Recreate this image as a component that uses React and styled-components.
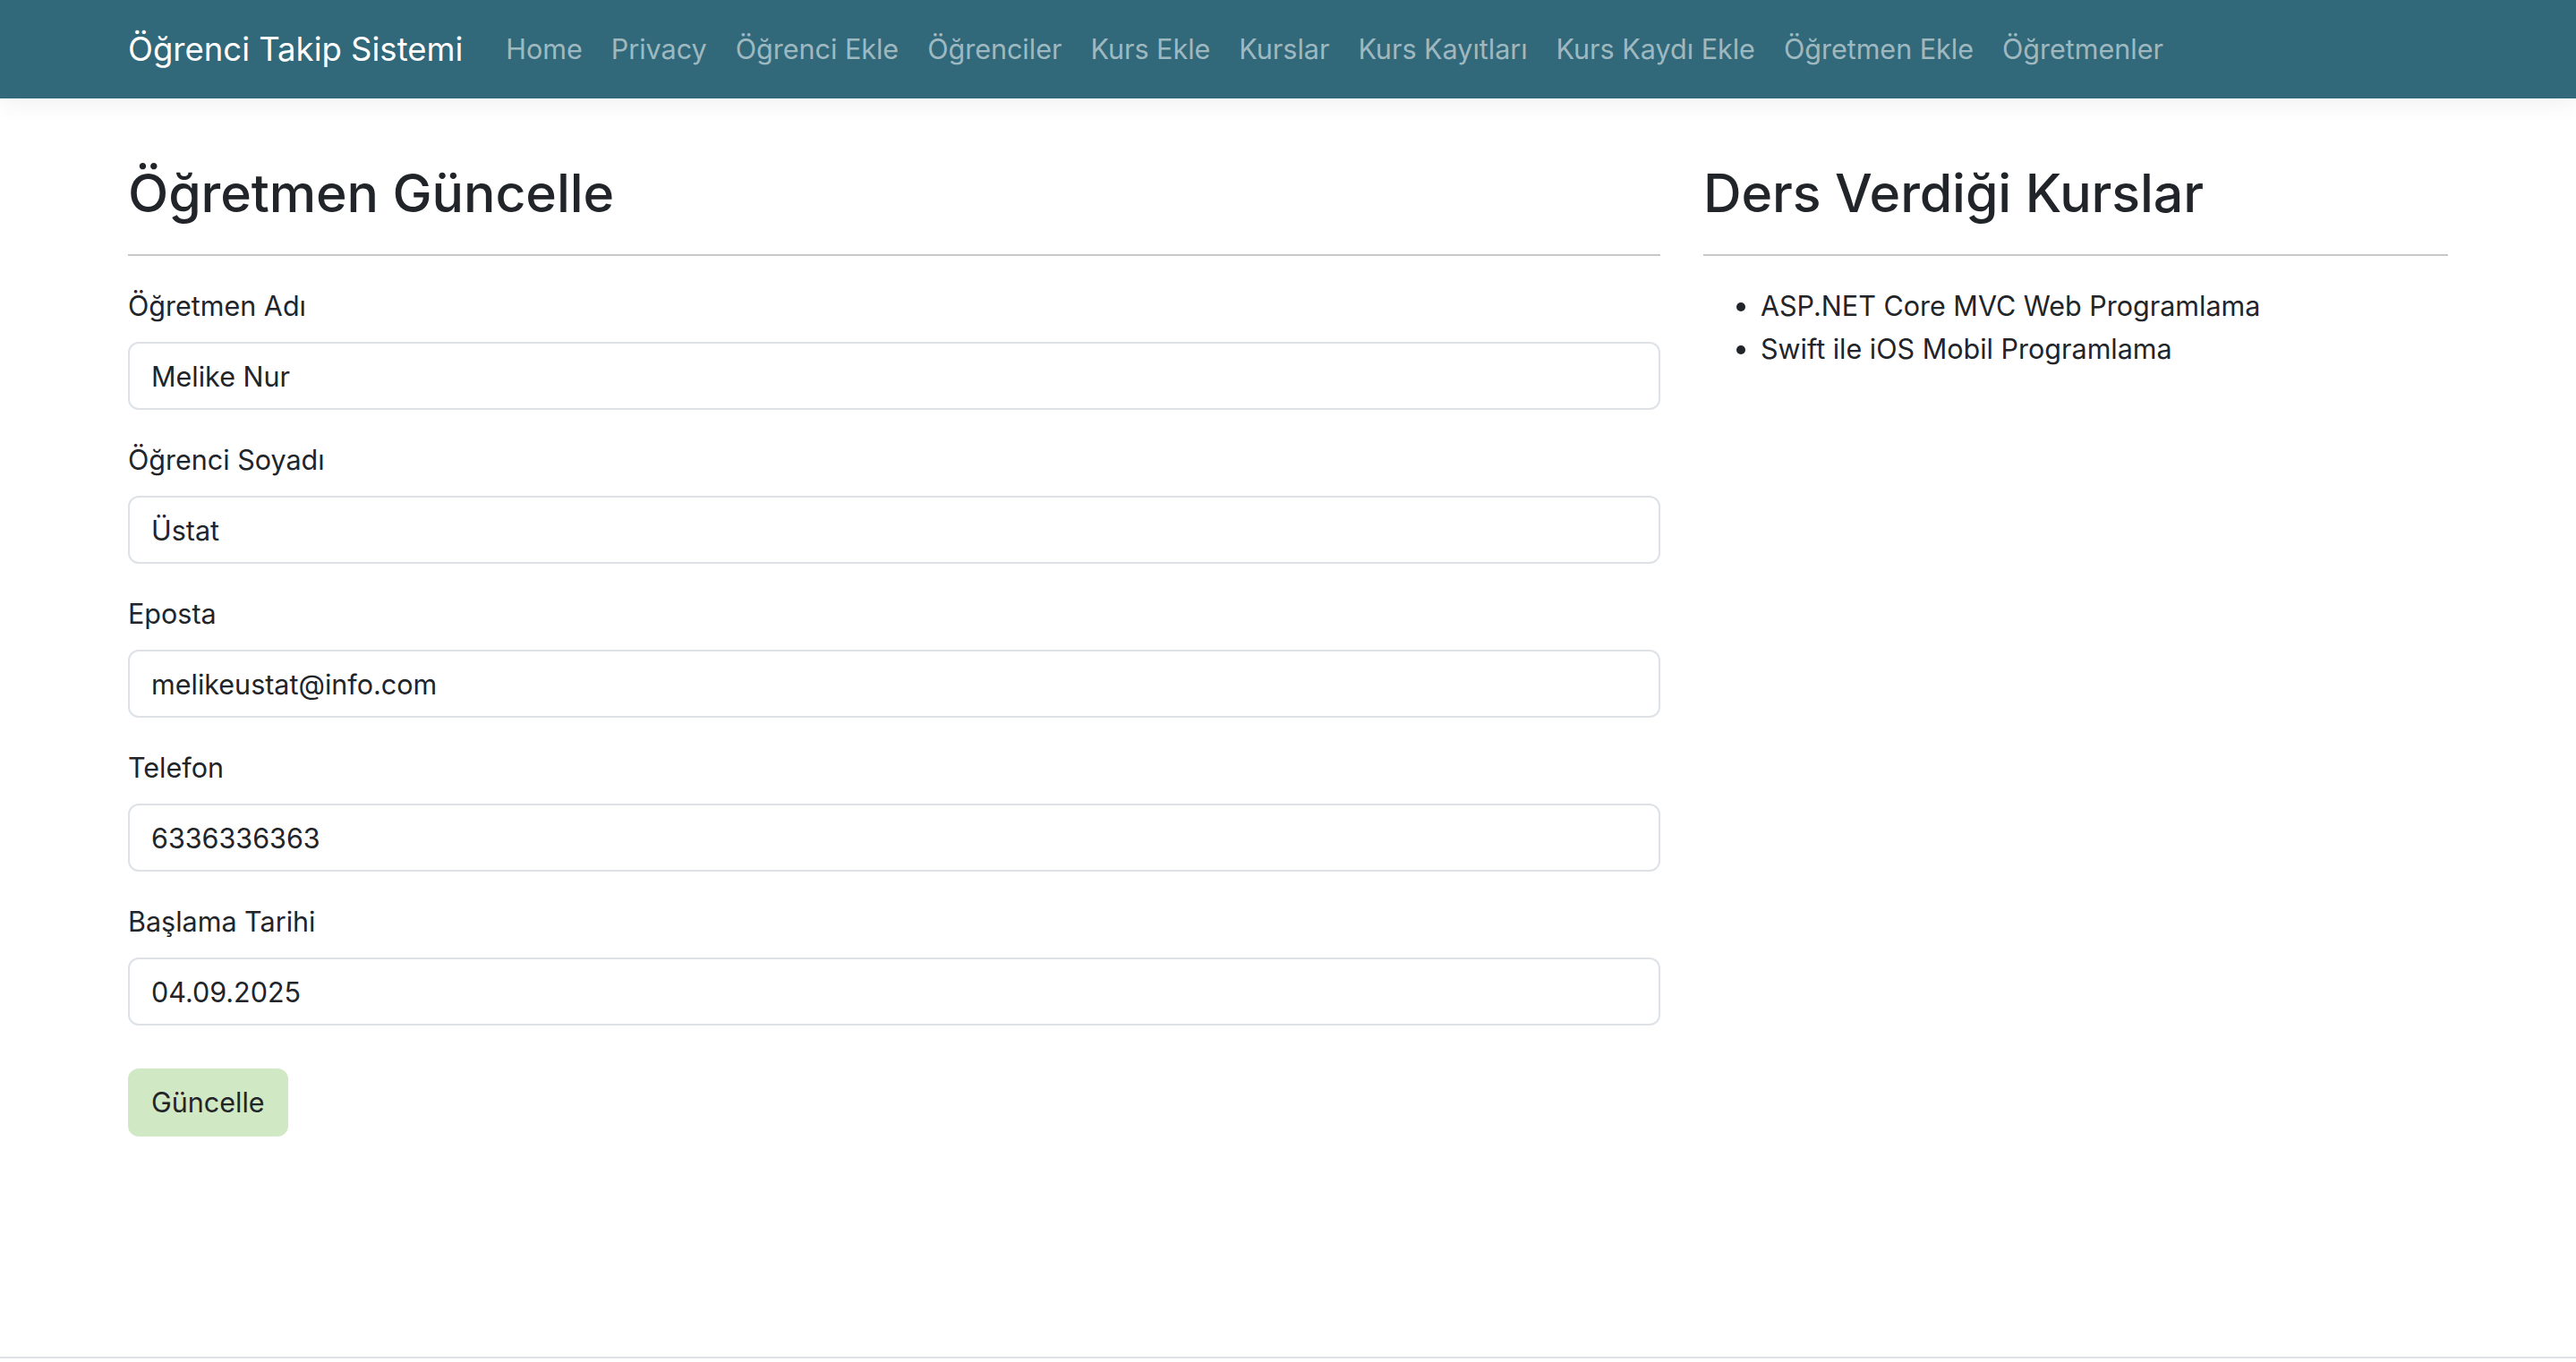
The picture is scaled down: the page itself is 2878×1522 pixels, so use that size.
import React from 'react';
import styled, { createGlobalStyle } from 'styled-components';

const GlobalStyle = createGlobalStyle`
  html, body {
    margin: 0;
    padding: 0;
  }
  body {
    background: #fff;
    color: #212529;
    font-family: 'Inter', 'Noto Sans', sans-serif;
    font-size: 30.5px;
    line-height: 48px;
  }
  *, *::before, *::after {
    box-sizing: border-box;
  }
`;

const Page = styled.div`
  display: flex;
  flex-direction: column;
  min-height: 100vh;
`;

const Container = styled.div`
  width: 100%;
  max-width: 2640px;
  margin: 0 auto;
  padding: 0 24px;
`;

const Navbar = styled.nav`
  height: 110px;
  background: #31687a;
  box-shadow: 0 8px 24px rgba(0, 0, 0, 0.05);
  position: relative;
  z-index: 1;
`;

const NavInner = styled(Container)`
  display: flex;
  align-items: center;
  height: 100%;
`;

const Brand = styled.a`
  color: #fff;
  font-size: 36.5px;
  margin-right: 32px;
  text-decoration: none;
  white-space: nowrap;
`;

const NavList = styled.ul`
  display: flex;
  list-style: none;
  margin: 0;
  padding: 0;
`;

const NavLink = styled.a`
  display: block;
  padding: 0 16px;
  color: rgba(255, 255, 255, 0.55);
  text-decoration: none;
  white-space: nowrap;
`;

const Main = styled.main`
  flex: 1;
  padding-top: 70px;
`;

const Row = styled.div`
  display: flex;
  margin: 0 -24px;
`;

const Column = styled.div`
  flex: 0 0 ${(props) => (props.span / 12) * 100}%;
  max-width: ${(props) => (props.span / 12) * 100}%;
  padding: 0 24px;
`;

const Heading = styled.h2`
  margin: 0 0 33px;
  font-size: 59px;
  font-weight: 500;
  line-height: 71px;
  letter-spacing: -0.1px;
`;

const Divider = styled.hr`
  margin: 0 0 32px;
  border: 0;
  border-top: 2px solid #212529;
  opacity: 0.25;
`;

const FormGroup = styled.div`
  margin-bottom: 32px;
`;

const Label = styled.label`
  display: block;
  margin-bottom: 16px;
  line-height: 48px;
`;

const Input = styled.input`
  display: block;
  width: 100%;
  height: 76px;
  padding: 12px 24px;
  font: inherit;
  line-height: 48px;
  color: #212529;
  background: #fff;
  border: 2px solid #dee2e6;
  border-radius: 12px;
  outline: none;
`;

const Button = styled.button`
  margin-top: 16px;
  height: 76px;
  padding: 12px 24px;
  font: inherit;
  line-height: 48px;
  color: #212529;
  background: #d1e8c5;
  border: 2px solid #d1e8c5;
  border-radius: 12px;
`;

const CourseList = styled.ul`
  margin: 0 0 32px;
  padding-left: 64px;
  line-height: 48px;
`;

const Footer = styled.footer`
  height: 6px;
  border-top: 2px solid #dee2e6;
`;

const links = [
  'Home',
  'Privacy',
  'Öğrenci Ekle',
  'Öğrenciler',
  'Kurs Ekle',
  'Kurslar',
  'Kurs Kayıtları',
  'Kurs Kaydı Ekle',
  'Öğretmen Ekle',
  'Öğretmenler',
];

const fields = [
  { id: 'ad', label: 'Öğretmen Adı', value: 'Melike Nur' },
  { id: 'soyad', label: 'Öğrenci Soyadı', value: 'Üstat' },
  { id: 'eposta', label: 'Eposta', value: 'melikeustat@info.com' },
  { id: 'telefon', label: 'Telefon', value: '6336336363' },
  { id: 'tarih', label: 'Başlama Tarihi', value: '04.09.2025' },
];

const courses = ['ASP.NET Core MVC Web Programlama', 'Swift ile iOS Mobil Programlama'];

const App = () => {
  return (
    <Page>
      <GlobalStyle />
      <Navbar>
        <NavInner>
          <Brand href="#">Öğrenci Takip Sistemi</Brand>
          <NavList>
            {links.map((link) => (
              <li key={link}>
                <NavLink href="#">{link}</NavLink>
              </li>
            ))}
          </NavList>
        </NavInner>
      </Navbar>
      <Main>
        <Container>
          <Row>
            <Column span={8}>
              <Heading>Öğretmen Güncelle</Heading>
              <Divider />
              <form onSubmit={(e) => e.preventDefault()}>
                {fields.map((field) => (
                  <FormGroup key={field.id}>
                    <Label htmlFor={field.id}>{field.label}</Label>
                    <Input id={field.id} defaultValue={field.value} />
                  </FormGroup>
                ))}
                <Button type="submit">Güncelle</Button>
              </form>
            </Column>
            <Column span={4}>
              <Heading>Ders Verdiği Kurslar</Heading>
              <Divider />
              <CourseList>
                {courses.map((course) => (
                  <li key={course}>{course}</li>
                ))}
              </CourseList>
            </Column>
          </Row>
        </Container>
      </Main>
      <Footer />
    </Page>
  );
};

export default App;
